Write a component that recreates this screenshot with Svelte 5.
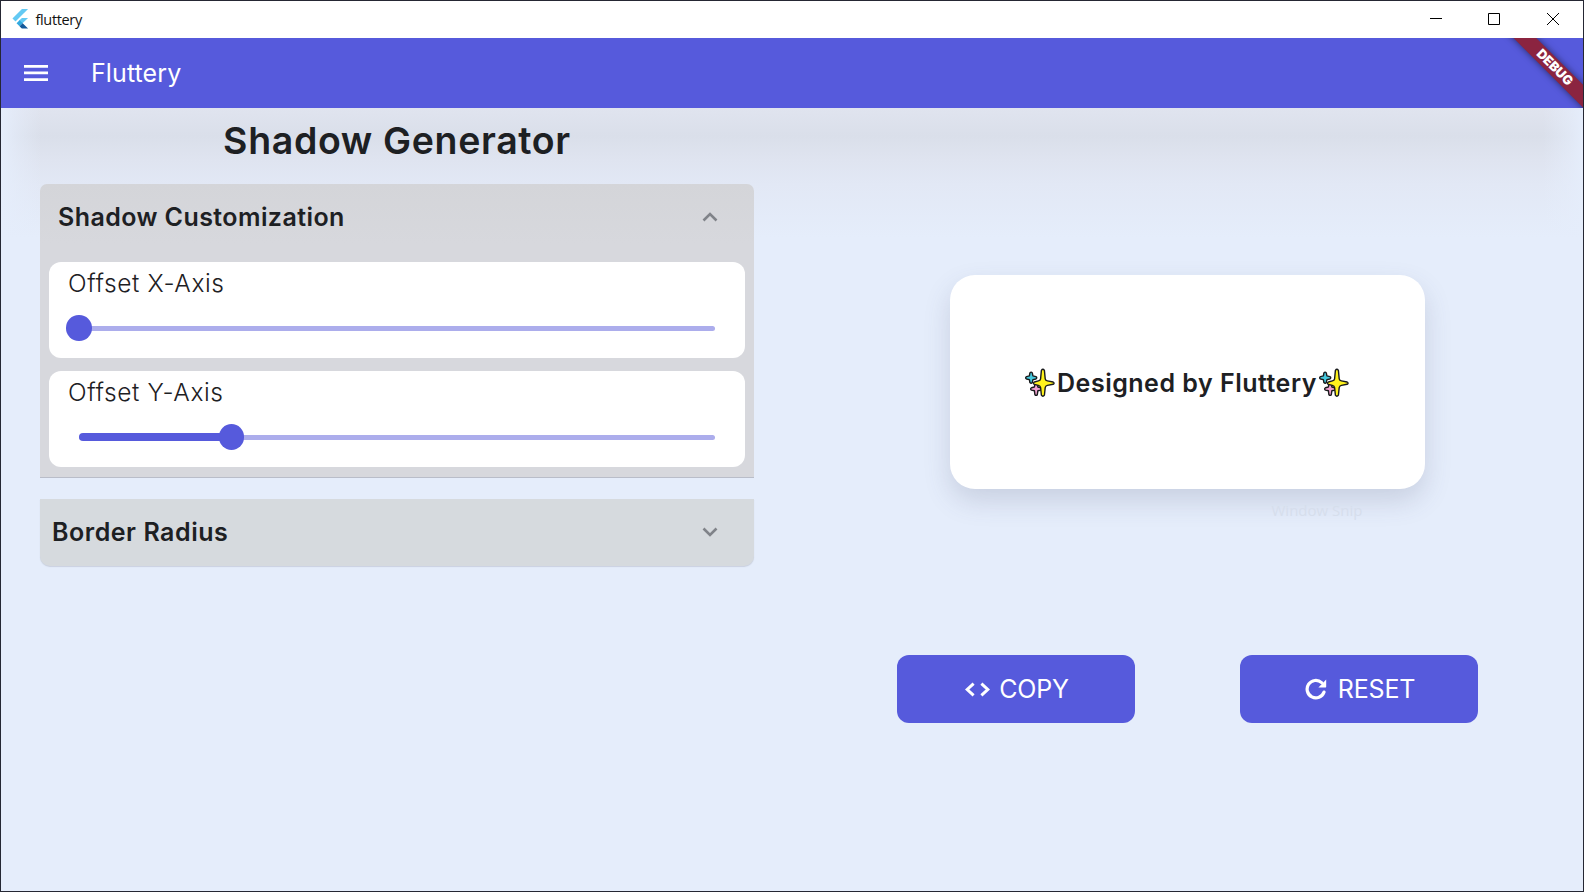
<script>
  const sliders = [
    { label: 'Offset X-Axis', value: 0 },
    { label: 'Offset Y-Axis', value: 24 }
  ];
</script>

{#snippet sparkles()}
  <svg class="sparkles" viewBox="0 0 30 30" aria-hidden="true">
    <g stroke="#191a1c" stroke-width="1.4" stroke-linejoin="round">
      <path fill="#45c8dd" d="M4.9 4.9q1.2-1.5 2.4 0l.6 3 3 .7q1.7 1.2 0 2.4l-3 .6-.6 3q-1.1 1.4-2.4 0l-.5-3-2.9-.6q-1.7-1.2 0-2.4l2.9-.7z" />
      <path fill="#f1a0d0" d="M9.9 16q1.2-1.5 2.4 0l.6 3 3 .7q1.7 1.2 0 2.4l-3 .6-.6 4q-1.1 1.4-2.4 0l-.5-4-2.9-.6q-1.7-1.2 0-2.4l2.9-.7z" />
      <path fill="#fff21c" d="M16.4 2.4q1.5-2.2 3 0l.8 8.4q.3 1.7 2.2 2.1l5.7 1.1q1.9 1.1 0 2.3l-5.7 1.1q-1.9.5-2.2 2.2l-.8 7.6q-1.5 2.2-3 0l-.8-7.6q-.3-1.7-2.2-2.2l-4-1.1q-1.9-1.2 0-2.3l4-1.1q1.9-.5 2.2-2.1z" />
    </g>
  </svg>
{/snippet}

<div class="window">
  <div class="titlebar">
    <svg class="logo" viewBox="0 0 18 21" aria-hidden="true">
      <path fill="#63c9f3" d="M10.5 0H17L3.7 13.2.5 10z" />
      <path fill="#63c9f3" d="M10.5 9.4H17l-6.7 6.4-3.2-3.2z" />
      <path fill="#32a9df" d="m4.8 15 3.2-3.2 3.4 3.2L8 18.2z" />
      <path fill="#14599b" d="m8 18.2 3.3-3.2 5.7 5.5h-5.5q-1.2-.1-1.7-.6z" />
    </svg>
    <span class="app-name">fluttery</span>
    <div class="controls">
      <svg viewBox="0 0 14 14"><path d="M1 6.5h12" /></svg>
      <svg viewBox="0 0 14 14"><path d="M1.5 1.5h11v11h-11z" /></svg>
      <svg viewBox="0 0 14 14"><path d="m1 1 12 12M13 1 1 13" /></svg>
    </div>
  </div>

  <header class="appbar">
    <svg class="menu" viewBox="0 0 24 16"><path fill="#fff" d="M0 0h24v2.7H0zM0 6.6h24v2.7H0zM0 13.3h24V16H0z" /></svg>
    <span>Fluttery</span>
    <div class="debug">DEBUG</div>
  </header>

  <main>
    <section class="settings">
      <h1>Shadow Generator</h1>
      <div class="panel open">
        <div class="panel-head">
          <h2>Shadow Customization</h2>
          <svg class="chevron" viewBox="0 0 16 10"><path d="m1.5 8.5 6.5-6.5 6.5 6.5" /></svg>
        </div>
        {#each sliders as s}
          <div class="card">
            <div class="label">{s.label}</div>
            <div class="slider">
              {#if s.value > 0}<div class="active" style="width: {s.value}%"></div>{/if}
              <div class="thumb" style="left: {s.value}%"></div>
            </div>
          </div>
        {/each}
      </div>
      <div class="panel closed">
        <h2>Border Radius</h2>
        <svg class="chevron" viewBox="0 0 16 10"><path d="M1.5 1.5 8 8l6.5-6.5" /></svg>
      </div>
    </section>

    <section class="output">
      <div class="preview">
        {@render sparkles()}<span>Designed by Fluttery</span>{@render sparkles()}
        <div class="ghost">Window Snip</div>
      </div>
      <div class="buttons">
        <button>
          <svg class="code" viewBox="0 0 25 15"><path d="M8.6 1.6 2.2 7.5l6.4 5.9M16.4 1.6l6.4 5.9-6.4 5.9" /></svg>
          <span>COPY</span>
        </button>
        <button>
          <svg class="refresh" viewBox="0 0 22 22"><path class="arc" d="M16.6 4.6A8.7 8.7 0 1 0 19 14.1" /><path class="head" d="M21.2 1.6v7.2q0 .6-.6.6h-7.2z" /></svg>
          <span>RESET</span>
        </button>
      </div>
    </section>
  </main>
</div>

<style>
  :global(body) { margin: 0; overflow: hidden; }
  .window {
    box-sizing: border-box;
    width: 1584px;
    height: 892px;
    border: 1px solid #252733;
    display: flex;
    flex-direction: column;
    font-family: Inter, sans-serif;
    color: #1d2023;
    background: #e5edfb;
    overflow: hidden;
  }
  .titlebar {
    height: 37px;
    flex: none;
    display: flex;
    align-items: center;
    background: #fff;
    padding-left: 11px;
  }
  .logo { width: 17px; height: 20px; margin-top: -1px; }
  .app-name {
    margin-left: 6.5px;
    font: 14.5px/20px "Open Sans", sans-serif;
    letter-spacing: -0.35px;
    color: #111;
  }
  .controls { margin: -1px 23px 0 auto; display: flex; gap: 45px; }
  .controls svg { width: 14px; height: 14px; }
  .controls svg:nth-child(2) { margin-left: -1px; }
  .controls path { fill: none; stroke: #000; stroke-width: 1; }

  .appbar {
    height: 70px;
    flex: none;
    position: relative;
    overflow: hidden;
    display: flex;
    align-items: center;
    gap: 43px;
    padding-left: 23px;
    background: #565adc;
    color: #fff;
    font-size: 25px;
    letter-spacing: 0.1px;
  }
  .menu { width: 24px; height: 16px; }
  .debug {
    position: absolute;
    right: -46.5px;
    top: 21.5px;
    width: 150px;
    height: 15.5px;
    transform: rotate(45deg);
    background: #8b2440;
    box-shadow: 0 0 7px rgba(0, 0, 0, 0.55);
    color: #fff;
    font-size: 13px;
    line-height: 15.5px;
    font-weight: 900;
    letter-spacing: 0;
    text-align: center;
    text-indent: -1px;
  }

  main {
    flex: 1;
    display: flex;
    background:
      linear-gradient(90deg, #e5edfb 0, #e5edfb99 14px, #e5edfb00 40px, #e5edfb00 calc(100% - 40px), #e5edfb99 calc(100% - 14px), #e5edfb 100%),
      linear-gradient(#e0e4ef 0, #dadfea 28px, #dfe4f0 52px, #e2e8f5 76px, #e5edfb 130px);
  }
  .settings { width: 714px; padding-left: 39px; }
  h1 {
    margin: 13px 0 23px;
    text-align: center;
    font-size: 37.5px;
    line-height: 40px;
    font-weight: 630;
    letter-spacing: 0.64px;
  }
  h2 {
    margin: 0;
    font-size: 25px;
    line-height: 30px;
    font-weight: 620;
    letter-spacing: 0.42px;
  }
  .closed h2 { margin-top: -2px; letter-spacing: 0.53px; }
  .panel { box-sizing: border-box; background: #d7d8dc; }
  .open {
    height: 294px;
    padding: 0 9px;
    border-radius: 7px 7px 0 0;
    border-bottom: 1px solid #b9bdc9;
    background: linear-gradient(#d4d5d9, #d7d8dd 60px);
  }
  .panel-head, .closed { display: flex; align-items: center; justify-content: space-between; }
  .panel-head { height: 66px; padding: 0 27px 12px 9px; }
  .closed {
    margin-top: 21px;
    height: 67px;
    padding: 0 36px 0 12px;
    border-radius: 0 0 10px 10px;
    background: #d6dade;
    box-shadow: 0 1px 1px rgba(120, 125, 145, 0.25);
  }
  .chevron { width: 16px; height: 10px; }
  .closed .chevron { margin-top: -1px; }
  .chevron path { fill: none; stroke: #808389; stroke-width: 2.6; }
  .card {
    box-sizing: border-box;
    height: 96px;
    margin-bottom: 13px;
    padding: 6px 30px 0 19px;
    border-radius: 12px;
    background: #fff;
  }
  .label { font-size: 24.5px; line-height: 31px; font-weight: 320; letter-spacing: 0.6px; }
  .slider {
    position: relative;
    height: 5px;
    margin: 26.5px 0 0 11px;
    border-radius: 3px;
    background: #acadec;
  }
  .active {
    position: absolute;
    left: 0;
    top: -1.25px;
    height: 7.5px;
    border-radius: 4px;
    background: #565adc;
  }
  .thumb {
    position: absolute;
    top: -10.25px;
    width: 25.5px;
    height: 25.5px;
    margin-left: -12.75px;
    border-radius: 50%;
    background: #565adc;
  }

  .output {
    flex: 1;
    display: flex;
    flex-direction: column;
    align-items: center;
    padding: 167px 0 0 37px;
  }
  .preview {
    position: relative;
    width: 475px;
    height: 213.5px;
    display: flex;
    align-items: center;
    justify-content: center;
    border-radius: 25px;
    background: #fff;
    box-shadow: 0 12px 27px rgba(70, 80, 110, 0.18);
    font-size: 25px;
    font-weight: 620;
    letter-spacing: 0.5px;
  }
  .preview span { margin-top: 2px; }
  .sparkles { width: 30px; height: 30px; margin: 2px 2px 0; }
  .ghost {
    position: absolute;
    left: 322px;
    top: 226px;
    font: 15px/18px "Open Sans", sans-serif;
    letter-spacing: 0;
    color: #d6deec;
  }
  .buttons { display: flex; gap: 105px; margin-top: 166.5px; }
  button {
    width: 238px;
    height: 68px;
    padding: 0 0 0 3px;
    border: 0;
    border-radius: 12px;
    display: flex;
    align-items: center;
    justify-content: center;
    gap: 9px;
    background: #565adc;
    color: #fff;
    font: 400 25px/30px Inter, sans-serif;
    letter-spacing: -0.2px;
  }
  button + button { gap: 11px; }
  .code { width: 25px; height: 15px; }
  .code path { fill: none; stroke: #fff; stroke-width: 3; }
  .refresh { width: 22px; height: 22px; }
  .arc { fill: none; stroke: #fff; stroke-width: 3.2; stroke-linecap: round; }
  .head { fill: #fff; }
</style>
